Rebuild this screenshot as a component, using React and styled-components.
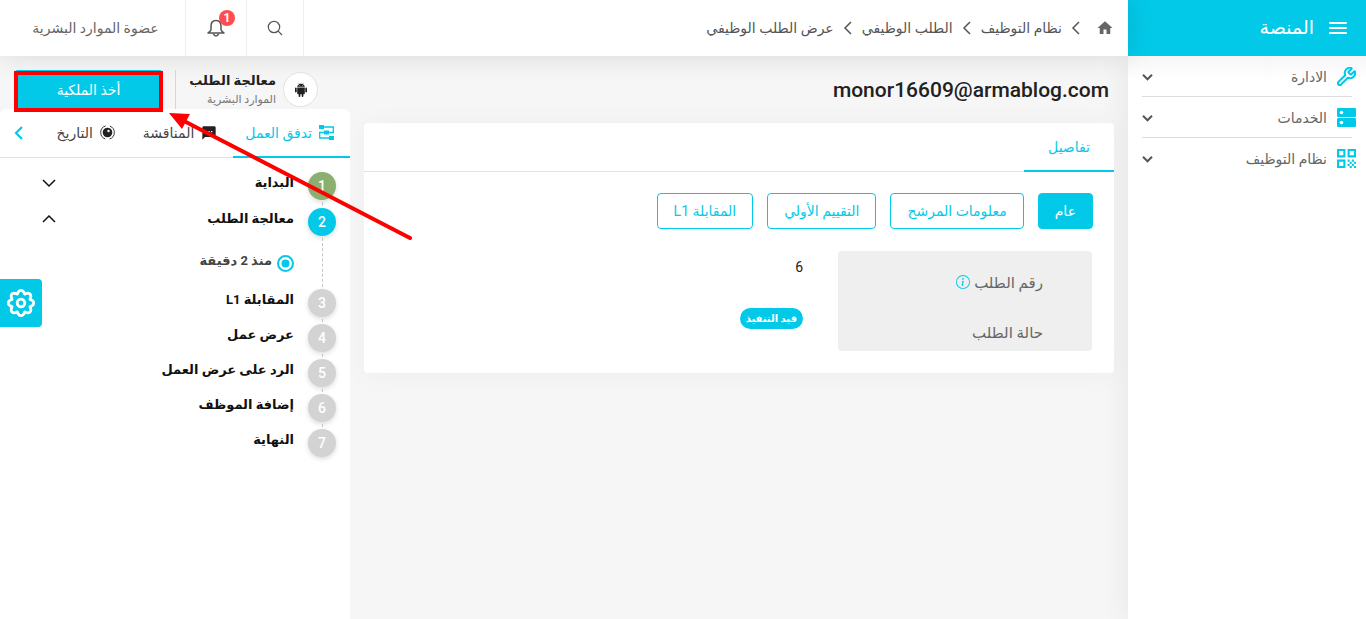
import React from "react";
import styled, { createGlobalStyle } from "styled-components";
import { BsInfoCircle } from "react-icons/bs";
import { AiFillAndroid } from "react-icons/ai";
import { MdHome, MdQrCode, MdSms } from "react-icons/md";
import { Wrench } from "lucide-react";

const cyan = "#03c9e8";

const Global = createGlobalStyle`
  *, *::before, *::after { box-sizing: border-box; }
  body {
    margin: 0;
    background: #f6f6f6;
    color: #212121;
    font-family: Roboto, "DejaVu Sans", sans-serif;
    font-size: 14px;
    line-height: 20px;
  }
  button { font: inherit; border: 0; padding: 0; background: none; color: inherit; cursor: pointer; }
  a { color: inherit; text-decoration: none; }
  svg { display: block; flex: none; }
`;

const Shell = styled.div`
  position: relative;
  display: flex;
  min-height: 100vh;
`;

const Sidebar = styled.aside`
  flex: 0 0 238px;
  background: #fff;
  box-shadow: 0 0 28px rgba(0, 0, 0, 0.08);
`;

const Brand = styled.div`
  display: flex;
  align-items: center;
  gap: 14px;
  height: 56px;
  padding: 0 18px;
  background: ${cyan};
  color: #fff;
  font-size: 19px;
`;

const Nav = styled.nav`
  display: flex;
  flex-direction: column;
  padding: 0 10px 0 14px;
  background: linear-gradient(#f6f6f6, #fff 24px);
`;

const NavItem = styled.button`
  display: flex;
  align-items: center;
  gap: 10px;
  height: 41px;
  color: #666;
  svg:first-child { color: ${cyan}; }
  svg:last-child { margin-right: auto; color: #555; }
`;

const NavRule = styled.hr`
  width: 100%;
  height: 1px;
  margin: -1px 0 0;
  border: 0;
  background: linear-gradient(to left, transparent 4px, #ddd 4px);
`;

const Page = styled.div`
  flex: 1;
  min-width: 0;
  display: flex;
  flex-direction: column;
`;

const Topbar = styled.header`
  display: flex;
  justify-content: space-between;
  height: 56px;
  background: #fff;
  box-shadow: 0 0 28px rgba(0, 0, 0, 0.12);
`;

const Crumbs = styled.nav`
  display: flex;
  align-items: center;
  gap: 10px;
  padding-right: 14px;
  color: #555;
  a:first-child { margin-left: 6px; color: #666; }
`;

const Tools = styled.div`
  display: flex;
  border-right: 1px solid #eee;
`;

const Tool = styled.button`
  display: flex;
  align-items: center;
  justify-content: center;
  width: ${(p) => p.$width};
  border-left: 1px solid #eee;
  color: #555;
  &:last-child { border-left: 0; padding-left: 6px; color: #666; }
`;

const BellWrap = styled.span`
  position: relative;
`;

const Count = styled.span`
  position: absolute;
  top: -9px;
  right: -10px;
  width: 16px;
  height: 16px;
  border-radius: 8px;
  background: #ff4d4f;
  color: #fff;
  font-size: 12px;
  font-weight: 700;
  line-height: 16px;
  text-align: center;
`;

const Body = styled.div`
  flex: 1;
  display: flex;
`;

const Main = styled.main`
  flex: 1;
  min-width: 0;
  padding: 20px 14px;
`;

const Title = styled.h1`
  margin: 0 5px 19px;
  font-size: 21px;
  font-weight: 500;
  line-height: 28px;
`;

const Card = styled.section`
  padding-bottom: 22px;
  border-radius: 4px;
  background: #fff;
  box-shadow: 0 2px 28px rgba(0, 0, 0, 0.04);
`;

const TabBar = styled.div`
  display: flex;
  height: 49px;
  border-bottom: 1px solid #e2e2e2;
`;

const Tab = styled.button`
  display: flex;
  align-items: center;
  justify-content: center;
  gap: 7px;
  height: 49px;
  padding: ${(p) => (p.$wide ? "0 24px" : "0 16px 0 12px")};
  border-bottom: 2px solid ${(p) => (p.$active ? cyan : "transparent")};
  color: ${(p) => (p.$active ? cyan : "#444")};
  white-space: nowrap;
`;

const Filters = styled.div`
  display: flex;
  flex-wrap: wrap;
  gap: 14px;
  padding: 21px 21px 22px;
`;

const Filter = styled.button`
  height: 36px;
  padding: 0 16px;
  border: 1px solid ${cyan};
  border-radius: 4px;
  background: ${(p) => (p.$active ? cyan : "#fff")};
  color: ${(p) => (p.$active ? "#fff" : cyan)};
`;

const Fields = styled.dl`
  display: grid;
  grid-template-columns: 254px 1fr;
  grid-auto-rows: 50px;
  margin: 0 22px;
`;

const Label = styled.dt`
  display: flex;
  align-items: flex-end;
  gap: 4px;
  padding: 0 49px 8px;
  background: #efefef;
  color: #666;
  font-size: 15px;
  &:first-of-type { border-radius: 4px 4px 0 0; }
  &:last-of-type { border-radius: 0 0 4px 4px; }
  svg { margin-bottom: 4px; color: ${cyan}; }
`;

const Value = styled.dd`
  margin: 0;
  padding: 6px 35px 0;
`;

const Badge = styled.span`
  display: inline-block;
  height: 21px;
  padding: 0 6px;
  border-radius: 11px;
  background: ${cyan};
  color: #fff;
  font-size: 10px;
  font-weight: 700;
  line-height: 21px;
`;

const Side = styled.aside`
  flex: 0 0 350px;
  display: flex;
  flex-direction: column;
`;

const Owner = styled.div`
  display: flex;
  height: 53px;
  padding: 14px 32px 0 14px;
`;

const Avatar = styled.span`
  display: flex;
  align-items: center;
  justify-content: center;
  width: 35px;
  height: 35px;
  margin: 2px 0 0 7px;
  border: 1px solid #e2e2e2;
  border-radius: 50%;
  background: #fff;
`;

const OwnerText = styled.div`
  display: flex;
  flex-direction: column;
  white-space: nowrap;
  strong { font-size: 13px; line-height: 22px; }
  span { color: #777; font-size: 11px; line-height: 16px; }
`;

const Claim = styled.div`
  position: relative;
  margin-right: auto;
  padding-right: 12px;
  border-right: 1px solid #d6d6d6;
`;

const ClaimButton = styled.button`
  width: 149px;
  height: 39px;
  border-radius: 4px;
  background: ${cyan};
  color: #fff;
`;

const Highlight = styled.span`
  position: absolute;
  top: 1px;
  left: 0;
  width: 149px;
  height: 41px;
  border: 4px solid #fe0000;
  pointer-events: none;
`;

const Panel = styled.section`
  flex: 1;
  border-radius: 6px 6px 0 0;
  background: #fff;
`;

const More = styled.button`
  margin: 0 auto 0 15px;
  color: ${cyan};
`;

const Steps = styled.ol`
  display: flex;
  flex-direction: column;
  gap: 7px;
  margin: 0;
  padding: 14px;
  list-style: none;
`;

const Step = styled.li`
  position: relative;
  display: flex;
  align-items: flex-start;
  gap: 14px;
  min-height: ${(p) => (p.$open ? "74px" : p.$toggle ? "29px" : "28px")};
  &:not(:last-child)::before {
    content: "";
    position: absolute;
    top: 30px;
    right: 13px;
    bottom: -5px;
    border-right: 1px dashed #c4c4c4;
  }
`;

const Dot = styled.span`
  flex: none;
  width: 28px;
  height: 28px;
  border-radius: 50%;
  background: ${(p) => p.$color};
  box-shadow: 0 2px 5px rgba(0, 0, 0, 0.14);
  color: #fff;
  font-weight: 500;
  line-height: 28px;
  text-align: center;
`;

const StepBody = styled.div`
  flex: 1;
`;

const StepHead = styled.div`
  display: flex;
  align-items: center;
  justify-content: space-between;
  height: 22px;
  padding-left: 28px;
  color: #111;
  font-size: 13px;
  font-weight: 700;
`;

const When = styled.div`
  display: flex;
  align-items: flex-start;
  gap: 5px;
  margin-top: 21px;
  color: #444;
  font-size: 13px;
  font-weight: 700;
  svg { margin-top: 4px; }
`;

const Settings = styled.button`
  position: absolute;
  top: 279px;
  left: 0;
  display: flex;
  align-items: center;
  justify-content: center;
  width: 42px;
  height: 48px;
  border-radius: 0 4px 4px 0;
  background: ${cyan};
  color: #fff;
`;

const Arrow = styled.svg`
  position: absolute;
  top: 104px;
  left: 160px;
  pointer-events: none;
`;

const MenuIcon = () => (
  <svg width="20" height="14" viewBox="0 0 20 14" stroke="currentColor" strokeWidth="2" strokeLinecap="round">
    <path d="M2 2H18M2 7H18M2 12H18" />
  </svg>
);

const chevrons = {
  left: { w: 8, h: 14, d: "M7 1L1 7L7 13" },
  down: { w: 14, h: 8, d: "M1 1L7 7L13 1" },
  up: { w: 14, h: 8, d: "M1 7L7 1L13 7" },
};

const Chevron = ({ to, scale = 1, weight = 1.5 }) => {
  const c = chevrons[to];
  return (
    <svg
      width={Math.round(c.w * scale)}
      height={Math.round(c.h * scale)}
      viewBox={`0 0 ${c.w} ${c.h}`}
      fill="none"
      stroke="currentColor"
      strokeWidth={weight}
      overflow="visible"
    >
      <path d={c.d} />
    </svg>
  );
};

const SearchIcon = () => (
  <svg width="16" height="16" viewBox="0 0 16 16" fill="none" stroke="currentColor" strokeWidth="1.2">
    <circle cx="7" cy="7" r="5.700" />
    <path d="M11.200 11.200L15 15" />
  </svg>
);

const BellIcon = () => (
  <svg width="18" height="18" viewBox="0 0 18 18" fill="none" stroke="currentColor" strokeWidth="1.500">
    <path d="M9 1.500C5.500 1.500 4 4 4 7V10.500C4 12 2.500 12.500 1 14H17C15.500 12.500 14 12 14 10.500V7C14 4 12.500 1.500 9 1.500Z" strokeLinejoin="round" />
    <path d="M6.500 14.500C7 17.700 11 17.700 11.500 14.500" />
  </svg>
);

const ServerIcon = () => (
  <svg width="19" height="19" viewBox="0 0 19 19">
    <rect width="19" height="9" rx="1" fill="currentColor" />
    <rect y="10" width="19" height="9" rx="1" fill="currentColor" />
    <circle cx="4.500" cy="4.500" r="1.800" fill="#fff" />
    <circle cx="4.500" cy="14.500" r="1.800" fill="#fff" />
  </svg>
);

const FlowIcon = () => (
  <svg width="15" height="15" viewBox="0 0 15 15" fill="none" stroke="currentColor" strokeWidth="1.300">
    <path fill="currentColor" stroke="none" d="M0 0h5v4H0zM5 5.500h5v4H5zM10 11h5v4h-5z" />
    <path d="M5 2H14.300V7.500H10M5 7.500H.7V13H10" />
  </svg>
);

const HistoryIcon = () => (
  <svg width="15" height="15" viewBox="0 0 15 15">
    <circle cx="7.500" cy="7.500" r="6.800" fill="none" stroke="#333" strokeDasharray="17 4.360" strokeDashoffset="8.500" />
    <circle cx="7.500" cy="7.500" r="4.800" fill="#222" />
    <circle cx="8.500" cy="6" r="1.200" fill="#fff" />
  </svg>
);

const RecordIcon = () => (
  <svg width="17" height="17" viewBox="0 0 17 17">
    <circle cx="8.500" cy="8.500" r="7.500" fill="none" stroke={cyan} strokeWidth="2" />
    <circle cx="8.500" cy="8.500" r="4" fill={cyan} />
  </svg>
);

/* Eight rounded teeth: a circle whose radius swings with the angle. */
const gearOutline = Array.from({ length: 96 }, (_, i) => {
  const a = (i / 96) * Math.PI * 2;
  const r = 11.2 + 1.5 * Math.cos(8 * a);
  const t = a - 0.06 * Math.sin(8 * a) * -1;
  return `${(15 + r * Math.cos(t)).toFixed(2)},${(15 + r * Math.sin(t)).toFixed(2)}`;
}).join(" ");

const GearIcon = () => (
  <svg width="30" height="30" viewBox="0 0 30 30" fill="none" stroke="currentColor" strokeWidth="2.800" strokeLinejoin="round">
    <circle cx="15" cy="15" r="3.800" />
    <polygon points={gearOutline} />
  </svg>
);

const navItems = [
  { label: "الادارة", icon: <Wrench size={19} strokeWidth={2.4} viewBox="1 1 22 22" /> },
  { label: "الخدمات", icon: <ServerIcon /> },
  { label: "نظام التوظيف", icon: <MdQrCode size={19} viewBox="3 3 18 18" /> },
];

const crumbs = ["نظام التوظيف", "الطلب الوظيفي", "عرض الطلب الوظيفي"];

const steps = [
  { label: "البداية", color: "#8aaf6e", toggle: "down" },
  { label: "معالجة الطلب", color: cyan, toggle: "up", when: "منذ 2 دقيقة" },
  { label: "المقابلة L1" },
  { label: "عرض عمل" },
  { label: "الرد على عرض العمل" },
  { label: "إضافة الموظف" },
  { label: "النهاية" },
];

export default function App() {
  return (
    <Shell dir="rtl" lang="ar">
      <Global />
      <Sidebar>
        <Brand>
          <button aria-label="القائمة"><MenuIcon /></button>
          <span>المنصة</span>
        </Brand>
        <Nav>
          {navItems.map((item, i) => (
            <React.Fragment key={item.label}>
              {i > 0 && <NavRule />}
              <NavItem>
                {item.icon}
                <span>{item.label}</span>
                <Chevron to="down" scale={0.75} weight={2.6} />
              </NavItem>
            </React.Fragment>
          ))}
        </Nav>
      </Sidebar>
      <Page>
        <Topbar>
          <Crumbs>
            <a href="#home" aria-label="الرئيسية"><MdHome size={18} /></a>
            {crumbs.map((label) => (
              <React.Fragment key={label}>
                <Chevron to="left" />
                <a href="#crumb">{label}</a>
              </React.Fragment>
            ))}
          </Crumbs>
          <Tools>
            <Tool $width="57px" aria-label="بحث"><SearchIcon /></Tool>
            <Tool $width="61px" aria-label="الإشعارات">
              <BellWrap>
                <BellIcon />
                <Count>1</Count>
              </BellWrap>
            </Tool>
            <Tool $width="185px">عضوة الموارد البشرية</Tool>
          </Tools>
        </Topbar>
        <Body>
          <Main>
            <Title>monor16609@armablog.com</Title>
            <Card>
              <TabBar>
                <Tab $active $wide>تفاصيل</Tab>
              </TabBar>
              <Filters>
                <Filter $active>عام</Filter>
                <Filter>معلومات المرشح</Filter>
                <Filter>التقييم الأولي</Filter>
                <Filter>المقابلة L1</Filter>
              </Filters>
              <Fields>
                <Label>رقم الطلب <BsInfoCircle size={14} /></Label>
                <Value>6</Value>
                <Label>حالة الطلب</Label>
                <Value><Badge>قيد التنفيذ</Badge></Value>
              </Fields>
            </Card>
          </Main>
          <Side>
            <Owner>
              <Avatar><AiFillAndroid size={16} /></Avatar>
              <OwnerText>
                <strong>معالجة الطلب</strong>
                <span>الموارد البشرية</span>
              </OwnerText>
              <Claim>
                <ClaimButton>أخذ الملكية</ClaimButton>
                <Highlight />
              </Claim>
            </Owner>
            <Panel>
              <TabBar>
                <Tab $active><FlowIcon />تدفق العمل</Tab>
                <Tab><MdSms size={16} color="#212121" />المناقشة</Tab>
                <Tab><HistoryIcon />التاريخ</Tab>
                <More aria-label="المزيد"><Chevron to="left" weight={2.2} /></More>
              </TabBar>
              <Steps>
                {steps.map((step, i) => (
                  <Step key={step.label} $open={Boolean(step.when)} $toggle={Boolean(step.toggle)}>
                    <Dot $color={step.color || "#d3d3d3"}>{i + 1}</Dot>
                    <StepBody>
                      <StepHead>
                        <span>{step.label}</span>
                        {step.toggle && (
                          <button aria-label={step.label}><Chevron to={step.toggle} /></button>
                        )}
                      </StepHead>
                      {step.when && <When><RecordIcon /><span>{step.when}</span></When>}
                    </StepBody>
                  </Step>
                ))}
              </Steps>
            </Panel>
          </Side>
        </Body>
      </Page>
      <Settings aria-label="الإعدادات"><GearIcon /></Settings>
      <Arrow width="256" height="140" viewBox="0 0 256 140">
        <path d="M24 17L250 134" stroke="#fe0000" strokeWidth="4" strokeLinecap="round" />
        <path d="M9 9L30 10L22 25Z" fill="#fe0000" />
      </Arrow>
    </Shell>
  );
}
